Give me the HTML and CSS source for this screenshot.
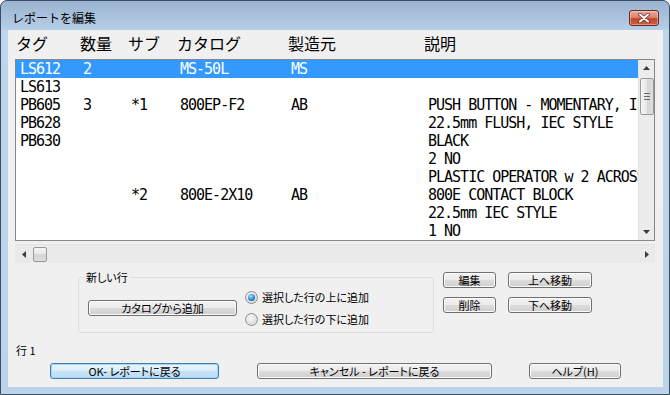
FILE: index.html
```html
<!DOCTYPE html>
<html lang="ja">
<head>
<meta charset="utf-8">
<title>レポートを編集</title>
<link rel="stylesheet" href="styles.css">
</head>
<body>
<div class="window">
  <div class="titlebar">
    <span class="title">レポートを編集</span>
    <button class="close" aria-label="閉じる">
      <svg width="14" height="10" viewBox="0 0 14 10"><path d="M3 1.5 L11 8.5 M11 1.5 L3 8.5" stroke="#6a3026" stroke-width="3.6" stroke-linecap="round"/><path d="M3 1.5 L11 8.5 M11 1.5 L3 8.5" stroke="#ffffff" stroke-width="2" stroke-linecap="round"/></svg>
    </button>
  </div>
  <div class="client">
    <div class="hdr">
      <span>タグ</span><span>数量</span><span>サブ</span><span>カタログ</span><span>製造元</span><span>説明</span>
    </div>
    <div class="list">
      <div class="rows">
        <div class="row sel"><span>LS612</span><span>2</span><span></span><span>MS-50L</span><span>MS</span><span></span></div>
        <div class="row"><span>LS613</span><span></span><span></span><span></span><span></span><span></span></div>
        <div class="row"><span>PB605</span><span>3</span><span>*1</span><span>800EP-F2</span><span>AB</span><span>PUSH BUTTON - MOMENTARY, IP66</span></div>
        <div class="row"><span>PB628</span><span></span><span></span><span></span><span></span><span>22.5mm FLUSH, IEC STYLE</span></div>
        <div class="row"><span>PB630</span><span></span><span></span><span></span><span></span><span>BLACK</span></div>
        <div class="row"><span></span><span></span><span></span><span></span><span></span><span>2 NO</span></div>
        <div class="row"><span></span><span></span><span></span><span></span><span></span><span>PLASTIC OPERATOR w 2 ACROSS</span></div>
        <div class="row"><span></span><span></span><span>*2</span><span>800E-2X10</span><span>AB</span><span>800E CONTACT BLOCK</span></div>
        <div class="row"><span></span><span></span><span></span><span></span><span></span><span>22.5mm IEC STYLE</span></div>
        <div class="row"><span></span><span></span><span></span><span></span><span></span><span>1 NO</span></div>
      </div>
      <div class="vscroll">
        <span class="sarrow v"><svg width="7" height="4" viewBox="0 0 7 4"><path d="M0 4 L3.5 0 L7 4 Z" fill="#3c3c3c"/></svg></span>
        <span class="vthumb"><i></i><i></i><i></i></span>
        <span class="track"></span>
        <span class="sarrow v"><svg width="7" height="4" viewBox="0 0 7 4"><path d="M0 0 L7 0 L3.5 4 Z" fill="#3c3c3c"/></svg></span>
      </div>
    </div>
    <div class="hscroll">
      <span class="sarrow h"><svg width="4" height="7" viewBox="0 0 4 7"><path d="M4 0 L4 7 L0 3.5 Z" fill="#3c3c3c"/></svg></span>
      <span class="hthumb"></span>
      <span class="track"></span>
      <span class="sarrow h"><svg width="4" height="7" viewBox="0 0 4 7"><path d="M0 0 L4 3.5 L0 7 Z" fill="#3c3c3c"/></svg></span>
    </div>
    <div class="lower">
      <fieldset class="group">
        <legend>新しい行</legend>
        <button class="btn add">カタログから追加</button>
        <div class="radios">
          <label class="radio-row"><span class="radio on"><span class="dot"></span></span>選択した行の上に追加</label>
          <label class="radio-row"><span class="radio"></span>選択した行の下に追加</label>
        </div>
      </fieldset>
      <div class="side">
        <button class="btn">編集</button>
        <button class="btn">上へ移動</button>
        <button class="btn">削除</button>
        <button class="btn">下へ移動</button>
      </div>
    </div>
    <div class="status">行 1</div>
    <div class="footer">
      <button class="btn ok">OK- レポートに戻る</button>
      <button class="btn cancel">キャンセル - レポートに戻る</button>
      <button class="btn help">ヘルプ(H)</button>
    </div>
  </div>
</div>
</body>
</html>
```
FILE: styles.css
```css
* { box-sizing: border-box; }
html, body { margin: 0; padding: 0; }
body {
  width: 670px;
  height: 395px;
  overflow: hidden;
  background: #ffffff;
  font-family: "Noto Sans CJK JP", sans-serif;
  color: #000;
}
.window {
  width: 670px;
  height: 395px;
  border: 1px solid #3a4d63;
  border-radius: 7px 7px 0 0;
  background: linear-gradient(to bottom, #9ab3cf 0, #b7cee8 29px, #bfd5ed 29px, #bcd3ec 100%);
  display: flex;
  flex-direction: column;
}
.titlebar {
  height: 29px;
  display: flex;
  align-items: center;
  padding: 5px 10px 0 11px;
}
.title {
  flex: 1;
  font-size: 12px;
  line-height: 14px;
}
.close {
  width: 30px;
  height: 16px;
  padding: 0;
  border: 1px solid #6d2a20;
  border-radius: 3px;
  background: linear-gradient(to bottom, #e9a898 0%, #d98670 45%, #c4452e 55%, #cf5e43 100%);
  box-shadow: inset 0 0 0 1px rgba(255, 255, 255, 0.35);
  display: flex;
  align-items: center;
  justify-content: center;
}
.client {
  margin: 0 6px 0 7px;
  height: 357px;
  background: #f0f0f0;
  display: flex;
  flex-direction: column;
}
.hdr {
  height: 29px;
  display: grid;
  grid-template-columns: 64px 48px 49px 111px 136px 1fr;
  align-items: center;
  padding: 0 0 3px 8px;
  font-size: 16px;
  line-height: 20px;
}
.list {
  margin: 0 8px 0 7px;
  height: 182px;
  border: 1px solid #828790;
  background: #ffffff;
  display: flex;
}
.rows {
  flex: 1;
  min-width: 0;
  overflow: hidden;
  font-family: "DejaVu Sans Mono", monospace;
  font-size: 15px;
  letter-spacing: -1px;
}
.row {
  height: 18px;
  line-height: 18px;
  display: grid;
  grid-template-columns: 63px 48px 49px 111px 137px minmax(0, 1fr);
  padding-left: 4px;
  white-space: nowrap;
}
.row span { overflow: hidden; }
.row.sel { background: #3399ff; color: #ffffff; }
.vscroll {
  width: 16px;
  display: flex;
  flex-direction: column;
  align-items: center;
  background: #ececec;
  border-left: 1px solid #e2e2e2;
}
.sarrow {
  display: flex;
  align-items: center;
  justify-content: center;
  flex: none;
}
.sarrow.v { width: 15px; height: 16px; }
.sarrow.h { width: 17px; height: 19px; }
.vthumb {
  width: 14px;
  height: 37px;
  margin-top: 2px;
  border: 1px solid #9a9a9a;
  border-radius: 2px;
  background: linear-gradient(to right, #f4f4f4, #e6e6e6 50%, #d6d6d6 50%, #dcdcdc);
  display: flex;
  flex-direction: column;
  align-items: center;
  justify-content: center;
  gap: 2px;
}
.vthumb i {
  display: block;
  width: 6px;
  height: 1px;
  background: #6a6a6a;
}
.track { flex: 1; }
.hscroll {
  margin: 3px 8px 0 7px;
  height: 19px;
  display: flex;
  align-items: flex-start;
  background: #eaeaea;
  border-top: 1px solid #e3e3e3;
}
.hthumb {
  width: 14px;
  height: 15px;
  margin: 2px 0 0 1px;
  border: 1px solid #9a9a9a;
  border-radius: 2px;
  background: linear-gradient(to bottom, #f6f6f6, #e6e6e6 50%, #d6d6d6 50%, #dcdcdc);
}
.lower {
  display: flex;
  align-items: flex-start;
  margin: 7px 0 0 70px;
}
.group {
  width: 356px;
  height: 63px;
  margin: 0;
  min-width: 0;
  padding: 2px 0 2px 9px;
  border: 1px solid #d5dfe5;
  border-radius: 3px;
  display: flex;
  align-items: center;
}
.group legend {
  font-size: 11px;
  line-height: 14px;
  padding: 0 2px;
  margin-left: -4px;
  font-feature-settings: "palt";
}
.btn {
  height: 16px;
  padding: 0;
  font-family: "Noto Sans CJK JP", sans-serif;
  font-size: 11px;
  line-height: 13px;
  color: #000;
  border: 1px solid #707070;
  border-radius: 3px;
  background: linear-gradient(to bottom, #f2f2f2 0%, #ebebeb 49%, #dddddd 50%, #cfcfcf 100%);
  box-shadow: inset 0 0 0 1px #fbfbfb;
  font-feature-settings: "palt";
  white-space: nowrap;
  overflow: hidden;
}
.add { width: 149px; margin-right: 8px; flex: none; }
.radios { display: flex; flex-direction: column; }
.radio-row {
  height: 22px;
  display: flex;
  align-items: center;
  gap: 4px;
  font-size: 11px;
  font-feature-settings: "palt";
}
.radio {
  width: 13px;
  height: 13px;
  border-radius: 50%;
  border: 1px solid #8e8f8f;
  background: radial-gradient(circle at 40% 35%, #f8f8f8, #dcdcdc 70%, #c8c8c8);
  display: flex;
  align-items: center;
  justify-content: center;
}
.radio .dot {
  width: 7px;
  height: 7px;
  border-radius: 50%;
  background: radial-gradient(circle at 40% 35%, #a9e6ff, #2a86cf 55%, #0d4f8c);
}
.side {
  margin: 2px 0 0 9px;
  display: grid;
  grid-template-columns: 53px 84px;
  grid-auto-rows: 16px;
  column-gap: 12px;
  row-gap: 9px;
}
.status {
  margin-top: 10px;
  padding-left: 8px;
  height: 14px;
  font-size: 11px;
  line-height: 14px;
}
.footer {
  margin-top: 6px;
  display: flex;
  padding-left: 42px;
}
.ok {
  width: 169px;
  border-color: #3c7fb1;
  background: linear-gradient(to bottom, #eaf5fc 0%, #dcedfa 49%, #c9e3f7 50%, #bcdcf4 100%);
  box-shadow: inset 0 0 0 1px #a6d5f5;
}
.cancel { width: 235px; margin-left: 38px; }
.help { width: 92px; margin-left: 37px; }
```
